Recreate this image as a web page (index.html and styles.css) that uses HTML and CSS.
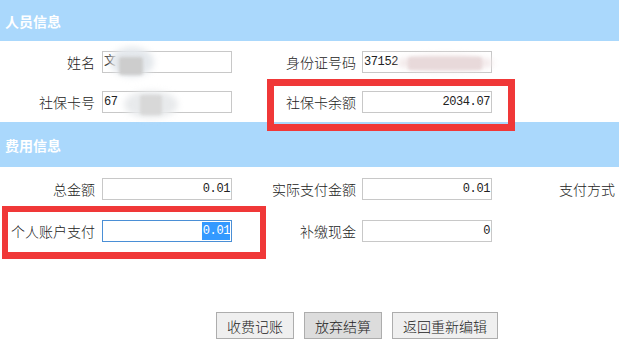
FILE: index.html
```html
<!DOCTYPE html>
<html lang="zh-CN">
<head>
<meta charset="utf-8">
<title>收费结算</title>
<link rel="stylesheet" href="styles.css">
</head>
<body>
<div class="page">
  <div class="band">人员信息</div>
  <div class="form form-person">
    <div class="label">姓名</div>
    <div class="field">文</div>
    <div class="label label-wide">身份证号码</div>
    <div class="field">37152</div>
    <div class="spacer"></div>

    <div class="label">社保卡号</div>
    <div class="field">67</div>
    <div class="label label-wide">社保卡余额</div>
    <div class="field num">2034.07</div>
    <div class="spacer"></div>
  </div>

  <div class="band band-fee">费用信息</div>
  <div class="form form-fee">
    <div class="label">总金额</div>
    <div class="field num">0.01</div>
    <div class="label label-wide">实际支付金额</div>
    <div class="field num">0.01</div>
    <div class="label label-last">支付方式</div>

    <div class="label">个人账户支付</div>
    <div class="field num focused"><span class="sel">0.01</span></div>
    <div class="label label-wide">补缴现金</div>
    <div class="field num">0</div>
    <div class="spacer"></div>
  </div>

  <div class="actions">
    <button class="btn">收费记账</button>
    <button class="btn btn-hover">放弃结算</button>
    <button class="btn btn-wide">返回重新编辑</button>
  </div>

  <div class="blur blur-name-a"></div>
  <div class="blur blur-name-b"></div>
  <div class="blur blur-card-a"></div>
  <div class="blur blur-card-b"></div>
  <div class="blur blur-id-a"></div>
  <div class="blur blur-id-b"></div>

  <div class="mark mark-balance"></div>
  <div class="mark mark-personal"></div>
</div>
</body>
</html>
```

FILE: styles.css
```css
html, body {
  margin: 0;
  padding: 0;
  background: #ffffff;
}

.page {
  position: relative;
  width: 619px;
  height: 348px;
  overflow: hidden;
  font-family: "Noto Sans CJK SC", "Liberation Sans", sans-serif;
  color: #222222;
}

.band {
  height: 41px;
  background: #aad8fc;
  color: #ffffff;
  font-weight: bold;
  font-size: 14px;
  display: flex;
  align-items: center;
  padding-left: 5px;
}

.band-fee {
  height: 45px;
}

.form {
  display: grid;
  grid-template-columns: 102px 130px 130px 130px 127px;
  grid-auto-rows: 22px;
  align-items: center;
}

.form-person {
  row-gap: 18px;
  padding: 10px 0 9px;
}

.form-fee {
  row-gap: 20px;
  padding: 11px 0 0;
}

.label {
  font-size: 14px;
  font-weight: 300;
  line-height: 22px;
  text-align: right;
  padding-right: 7px;
  white-space: nowrap;
}

.label-wide {
  padding-right: 6px;
}

.label-last {
  padding-right: 4px;
}

.field {
  height: 22px;
  box-sizing: border-box;
  border: 1px solid #c8c8c8;
  background: #ffffff;
  font-family: "Liberation Mono", "DejaVu Sans Mono", "Noto Sans CJK SC", monospace;
  font-size: 12px;
  letter-spacing: -0.4px;
  line-height: 20px;
  padding: 0 1px;
  white-space: nowrap;
  overflow: hidden;
  color: #222222;
}

.field.num {
  text-align: right;
}

.field.focused {
  border-color: #4a8fd6;
}

.sel {
  background: #3399ff;
  color: #ffffff;
  display: inline-block;
  line-height: 18px;
  padding-left: 1px;
}

.actions {
  display: flex;
  gap: 10px;
  padding-left: 216px;
  margin-top: 70px;
}

.btn {
  width: 78px;
  height: 27px;
  box-sizing: border-box;
  border: 1px solid #adadad;
  background: #efefef;
  font-family: "Noto Sans CJK SC", "Liberation Sans", sans-serif;
  font-size: 14px;
  font-weight: 300;
  color: #222222;
  padding: 0;
  white-space: nowrap;
  border-radius: 0;
}

.btn-wide {
  width: 106px;
}

.btn-hover {
  background: #dcdcdc;
}

/* privacy smudges over personal data */
.blur {
  position: absolute;
  border-radius: 50%;
  filter: blur(3px);
}

.blur-name-a {
  left: 110px; top: 47px; width: 44px; height: 30px;
  background: #e4e8ec;
}
.blur-name-b {
  left: 119px; top: 57px; width: 24px; height: 18px;
  background: #cdcdcd;
  border-radius: 3px;
  filter: blur(1.5px);
}
.blur-card-a {
  left: 124px; top: 91px; width: 54px; height: 27px;
  background: #e8eaec;
}
.blur-card-b {
  left: 140px; top: 95px; width: 22px; height: 20px;
  background: #d8d8d8;
  border-radius: 3px;
  filter: blur(1.5px);
}
.blur-id-a {
  left: 396px; top: 55px; width: 98px; height: 16px;
  background: #f1e7e8;
}
.blur-id-b {
  left: 408px; top: 57px; width: 74px; height: 13px;
  background: #e8d9da;
  border-radius: 3px;
  filter: blur(1.5px);
}

/* red annotation boxes */
.mark {
  position: absolute;
  box-sizing: border-box;
  border: 7px solid #f03838;
}

.mark-balance {
  left: 267px; top: 79px; width: 248px; height: 52px;
}

.mark-personal {
  left: 2px; top: 206px; width: 264px; height: 53px;
  border-width: 6px 6px 7px 6px;
}
```
